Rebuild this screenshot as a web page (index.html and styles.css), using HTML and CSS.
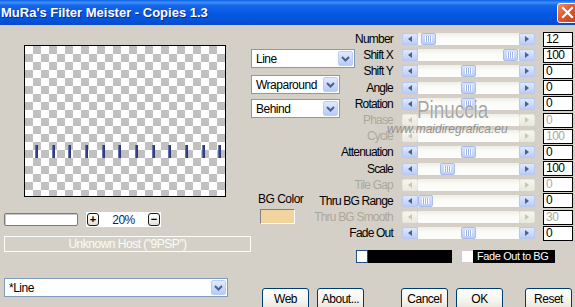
FILE: index.html
```html
<!DOCTYPE html>
<html lang="en">
<head>
  <meta charset="UTF-8" />
  <title>MuRa's Filter Meister - Copies 1.3</title>
  <link rel="stylesheet" href="styles.css">
</head>
<body>
  <div class="window">
    <div class="titlebar">
      <span class="title">MuRa's Filter Meister - Copies 1.3</span>
      <span class="close">
        <svg width="13" height="13" viewBox="0 0 13 13"><path d="M2 2 L11 11 M11 2 L2 11" stroke="#fff" stroke-width="2.2" stroke-linecap="square"/></svg>
      </span>
    </div>

    <div class="main">
      <div class="left">
        <div class="preview">
          <div class="ticks">
            <i></i><i></i><i></i><i></i><i></i><i></i><i></i><i></i><i></i><i></i><i></i><i></i>
          </div>
        </div>
        <div class="zoom-row">
          <div class="field"></div>
          <div class="zoom">
            <span class="zbtn">+</span>
            <span class="zval">20%</span>
            <span class="zbtn">&minus;</span>
          </div>
        </div>
        <div class="host">Unknown Host ("9PSP")</div>
        <div class="select preset">
          <span>*Line</span>
          <b class="drop"><svg width="9" height="6" viewBox="0 0 9 6"><path d="M1 1 L4.5 4.5 L8 1" fill="none" stroke="#4d6185" stroke-width="2"/></svg></b>
        </div>
      </div>

      <div class="right">
        <div class="top">
          <div class="params">
            <div class="row"><span class="lbl">Number</span><div class="slider"><span class="arr l"></span><span class="track"><span class="thumb" style="margin-left:3px"></span></span><span class="arr r"></span></div><span class="val">12</span></div>
            <div class="row"><span class="lbl">Shift X</span><div class="slider"><span class="arr l"></span><span class="track"><span class="thumb" style="margin-left:85px"></span></span><span class="arr r"></span></div><span class="val">100</span></div>
            <div class="row"><span class="lbl">Shift Y</span><div class="slider"><span class="arr l"></span><span class="track"><span class="thumb" style="margin-left:43px"></span></span><span class="arr r"></span></div><span class="val">0</span></div>
            <div class="row"><span class="lbl">Angle</span><div class="slider"><span class="arr l"></span><span class="track"><span class="thumb" style="margin-left:43px"></span></span><span class="arr r"></span></div><span class="val">0</span></div>
            <div class="row"><span class="lbl">Rotation</span><div class="slider"><span class="arr l"></span><span class="track"><span class="thumb" style="margin-left:43px"></span></span><span class="arr r"></span></div><span class="val">0</span></div>
            <div class="row off"><span class="lbl">Phase</span><div class="slider"><span class="arr l"></span><span class="track"></span><span class="arr r"></span></div><span class="val">0</span></div>
            <div class="row off"><span class="lbl">Cycle</span><div class="slider"><span class="arr l"></span><span class="track"></span><span class="arr r"></span></div><span class="val">100</span></div>
            <div class="row"><span class="lbl">Attenuation</span><div class="slider"><span class="arr l"></span><span class="track"><span class="thumb" style="margin-left:43px"></span></span><span class="arr r"></span></div><span class="val">0</span></div>
            <div class="row"><span class="lbl">Scale</span><div class="slider"><span class="arr l"></span><span class="track"><span class="thumb" style="margin-left:22px"></span></span><span class="arr r"></span></div><span class="val">100</span></div>
            <div class="row off"><span class="lbl">Tile Gap</span><div class="slider"><span class="arr l"></span><span class="track"></span><span class="arr r"></span></div><span class="val">0</span></div>
            <div class="row"><span class="lbl">Thru BG Range</span><div class="slider"><span class="arr l"></span><span class="track"><span class="thumb" style="margin-left:0px"></span></span><span class="arr r"></span></div><span class="val">0</span></div>
            <div class="row off"><span class="lbl">Thru BG Smooth</span><div class="slider"><span class="arr l"></span><span class="track"></span><span class="arr r"></span></div><span class="val">30</span></div>
            <div class="row"><span class="lbl">Fade Out</span><div class="slider"><span class="arr l"></span><span class="track"><span class="thumb" style="margin-left:43px"></span></span><span class="arr r"></span></div><span class="val">0</span></div>
          </div>

          <div class="middle">
            <div class="select line"><span>Line</span><b class="drop"><svg width="9" height="6" viewBox="0 0 9 6"><path d="M1 1 L4.5 4.5 L8 1" fill="none" stroke="#4d6185" stroke-width="2"/></svg></b></div>
            <div class="select wrap"><span>Wraparound</span><b class="drop"><svg width="9" height="6" viewBox="0 0 9 6"><path d="M1 1 L4.5 4.5 L8 1" fill="none" stroke="#4d6185" stroke-width="2"/></svg></b></div>
            <div class="select behind"><span>Behind</span><b class="drop"><svg width="9" height="6" viewBox="0 0 9 6"><path d="M1 1 L4.5 4.5 L8 1" fill="none" stroke="#4d6185" stroke-width="2"/></svg></b></div>
            <div class="bg-label">BG Color</div>
            <div class="swatch"></div>
          </div>
        </div>

        <div class="fade-row">
          <div class="fade-bar"><span class="fade-knob"></span></div>
          <span class="check"></span>
          <span class="fade-label">Fade Out to BG</span>
        </div>

        <div class="buttons">
          <span class="btn">Web</span>
          <span class="btn">About...</span>
          <span class="btn gap1">Cancel</span>
          <span class="btn">OK</span>
          <span class="btn gap2">Reset</span>
        </div>
      </div>
    </div>

    <div class="mark">Pinuccia</div>
    <div class="mark-url">www.maidiregrafica.eu</div>
  </div>
</body>
</html>
```

FILE: styles.css
```css
body {
  margin: 0;
  background: #d4d0c8;
  font-family: "Liberation Sans", Arial, sans-serif;
  font-size: 12px;
  letter-spacing: -0.5px;
  color: #000;
}

.window {
  position: relative;
  width: 575px;
  height: 307px;
  overflow: hidden;
  background: #d4d0c8;
}

/* title bar */
.titlebar {
  height: 25px;
  display: flex;
  align-items: center;
  justify-content: space-between;
  background: linear-gradient(#0a5fe8 0%, #3d8ff7 10%, #1766ea 22%, #0558e2 55%, #0452d8 85%, #0a49c6 100%);
}

.title {
  padding-left: 1px;
  font-weight: bold;
  font-size: 13px;
  letter-spacing: 0;
  color: #fff;
  text-shadow: 1px 1px 0 #0b2a8a;
}

.close {
  width: 20px;
  height: 20px;
  margin-right: -2px;
  box-sizing: border-box;
  border: 1px solid #fff;
  border-radius: 3px;
  background: linear-gradient(135deg, #ee8d6c 0%, #e2582f 45%, #c6401a 100%);
  display: flex;
  align-items: center;
  justify-content: center;
}

.main {
  display: flex;
  height: 282px;
}

/* left column */
.left {
  width: 251px;
  padding-left: 4px;
  box-sizing: border-box;
}

.preview {
  width: 202px;
  height: 152px;
  margin: 20px 0 0 20px;
  box-sizing: border-box;
  border: 1px solid #000;
  background-color: #fff;
  background-image: conic-gradient(#c0c0c0 25%, #fff 0 50%, #c0c0c0 0 75%, #fff 0);
  background-size: 16px 16px;
}

.ticks {
  display: flex;
  gap: 13.67px;
  padding: 99px 0 0 10px;
}

.ticks i {
  width: 3px;
  height: 13px;
  background: linear-gradient(to right, #7f89bf, #35418a 50%, #28336f);
}

.zoom-row {
  display: flex;
  align-items: center;
  margin-top: 15px;
  height: 15px;
}

.field {
  width: 74px;
  height: 13px;
  box-sizing: border-box;
  border: 1px solid #7a7a7a;
  border-radius: 2px;
  background: #fff;
  box-shadow: inset 1px 1px 0 #c8c8c8;
}

.zoom {
  display: flex;
  align-items: center;
  width: 75px;
  height: 15px;
  margin-left: 8px;
  padding: 0 1px;
  box-sizing: border-box;
  background: #fff;
}

.zbtn {
  width: 12px;
  height: 13px;
  box-sizing: border-box;
  border: 1px solid #1b1b1b;
  border-radius: 3px;
  background: linear-gradient(#fff, #e4e1d6);
  font-weight: bold;
  font-size: 11px;
  line-height: 10px;
  text-align: center;
  letter-spacing: 0;
}

.zval {
  flex: 1;
  text-align: center;
  color: #0a246a;
  font-size: 12px;
}

.host {
  width: 247px;
  height: 16px;
  margin-top: 9px;
  box-sizing: border-box;
  border: 1px solid #fbfbf8;
  color: #fbfbf8;
  line-height: 14px;
  text-align: center;
}

.select {
  display: flex;
  align-items: center;
  height: 19px;
  box-sizing: border-box;
  border: 1px solid #7f9db9;
  background: #fff;
  padding-left: 4px;
}

.drop {
  margin-left: auto;
  width: 15px;
  height: 15px;
  margin-right: 1px;
  box-sizing: border-box;
  border: 1px solid #bccdf4;
  border-radius: 2px;
  background: linear-gradient(#e1eafe, #b6cbf7);
  display: flex;
  align-items: center;
  justify-content: center;
}

.preset {
  width: 224px;
  margin-top: 26px;
}

/* right side */
.right {
  flex: 1;
  display: flex;
  flex-direction: column;
}

.top {
  display: grid;
  padding-top: 31px;
  margin-top: -25px;
}

.params, .middle {
  grid-area: 1 / 1;
}

.row {
  display: flex;
  align-items: center;
  height: 16.2px;
}

.lbl {
  width: 142px;
  padding-right: 9px;
  box-sizing: content-box;
  text-align: right;
  white-space: nowrap;
  font-size: 12px;
  letter-spacing: -0.8px;
}

.slider {
  display: flex;
  width: 133px;
  height: 12px;
  margin-right: 8px;
  flex-shrink: 0;
}

.track {
  flex: 1;
  display: flex;
  background: linear-gradient(#efede5, #fbfbf8 40%, #fdfdfb);
}

.arr {
  width: 16px;
  height: 12px;
  box-sizing: border-box;
  border: 1px solid #b7c9f2;
  border-radius: 2px;
  background: linear-gradient(#dfe8fe, #bacdf7);
  display: flex;
  align-items: center;
  justify-content: center;
}

.arr::before {
  content: "";
  border-top: 3.5px solid transparent;
  border-bottom: 3.5px solid transparent;
}

.arr.l::before {
  border-right: 4px solid #4d6185;
}

.arr.r::before {
  border-left: 4px solid #4d6185;
}

.thumb {
  width: 15px;
  height: 12px;
  box-sizing: border-box;
  border: 1px solid #a9bdec;
  border-radius: 2px;
  background: linear-gradient(#d8e3fe, #bccdf7);
  display: flex;
  align-items: center;
  justify-content: center;
}

.thumb::after {
  content: "";
  width: 7px;
  height: 6px;
  background: repeating-linear-gradient(to right, #fff 0 1px, #9fb3e4 1px 2px);
}

.val {
  width: 30px;
  height: 15px;
  box-sizing: border-box;
  border: 1px solid #000;
  background: #fff;
  padding-left: 2px;
  line-height: 13px;
  font-size: 12px;
}

.row.off .lbl,
.row.off .val {
  color: #aca899;
}

.row.off .arr {
  border-color: #e8e6dd;
  background: linear-gradient(#f6f5f0, #ebe9e0);
}

.row.off .arr.l::before {
  border-right-color: #c9c6b6;
}

.row.off .arr.r::before {
  border-left-color: #c9c6b6;
}

.middle {
  display: flex;
  flex-direction: column;
  align-items: flex-start;
}

.select.line {
  width: 104px;
  margin-top: 18px;
}

.select.wrap {
  width: 89px;
  margin-top: 7px;
}

.select.behind {
  width: 89px;
  margin-top: 5px;
}

.bg-label {
  margin: 75px 0 0 7px;
  height: 12px;
  line-height: 12px;
}

.swatch {
  width: 35px;
  height: 15px;
  margin: 4px 0 0 9px;
  box-sizing: border-box;
  border: 1px solid;
  border-color: #808080 #fff #fff #808080;
  background: #f1d49e;
}

.fade-row {
  display: flex;
  align-items: center;
  padding-left: 105px;
  margin-top: 9px;
  height: 13px;
}

.fade-bar {
  width: 96px;
  height: 13px;
  background: #000;
}

.fade-knob {
  display: block;
  width: 12px;
  height: 13px;
  box-sizing: border-box;
  border: 1px solid #254a82;
  background: #fff;
}

.check {
  width: 11px;
  height: 11px;
  margin-left: 10px;
  background: #fff;
}

.fade-label {
  width: 82px;
  height: 13px;
  box-sizing: border-box;
  padding-left: 4px;
  background: #000;
  color: #fff;
  font-size: 11px;
  line-height: 13px;
  letter-spacing: -0.4px;
}

.buttons {
  display: flex;
  gap: 8px;
  padding-left: 11px;
  margin-top: 25px;
}

.btn {
  width: 47px;
  height: 23px;
  box-sizing: border-box;
  border: 1px solid #003c74;
  border-radius: 3px;
  background: linear-gradient(#fff, #f3f2ec 60%, #e3e0d4);
  text-align: center;
  line-height: 20px;
  font-size: 12px;
}

.btn.gap1 {
  margin-left: 29px;
}

.btn.gap2 {
  margin-left: 14px;
}

/* watermark over the sliders */
.mark {
  position: absolute;
  left: 417px;
  top: 97px;
  font-size: 23px;
  letter-spacing: 0;
  color: rgba(150, 150, 150, 0.85);
  text-shadow: 0 0 1px #fff;
  transform: scaleX(0.82);
  transform-origin: left;
}

.mark-url {
  position: absolute;
  left: 387px;
  top: 122px;
  font-size: 12px;
  font-style: italic;
  letter-spacing: 0;
  color: rgba(130, 130, 130, 0.85);
}
```
